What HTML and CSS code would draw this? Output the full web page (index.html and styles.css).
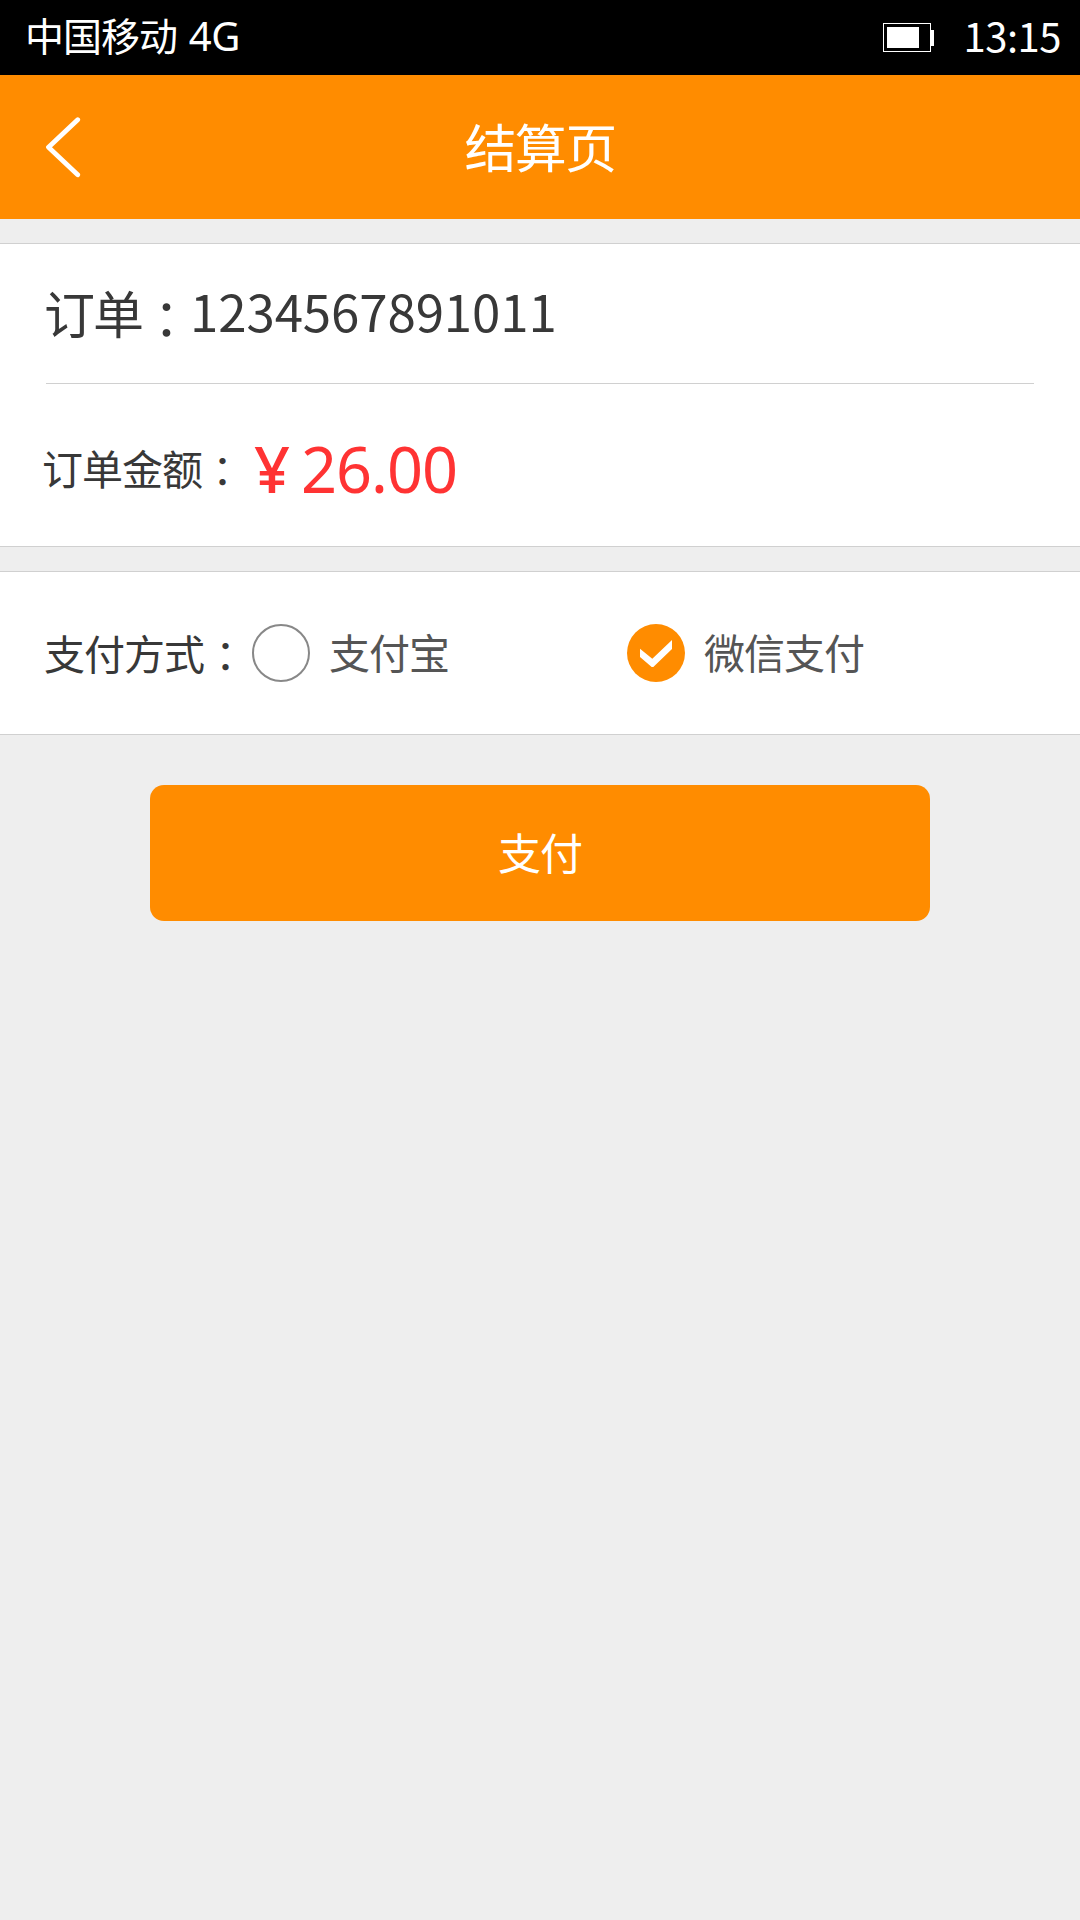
FILE: index.html
```html
<!DOCTYPE html>
<html lang="zh-CN">
<head>
<meta charset="UTF-8">
<title>结算页</title>
<link rel="stylesheet" href="styles.css">
</head>
<body>
<div class="status-bar">
  <span class="carrier">中国移动 <span class="network">4G</span></span>
  <svg class="battery" width="51" height="29" viewBox="0 0 51 29">
    <rect x="0.5" y="0.5" width="47" height="28" fill="none" stroke="#fff"/>
    <rect x="4" y="4" width="32" height="21" fill="#fff"/>
    <rect x="48" y="7" width="3" height="16" fill="#fff"/>
  </svg>
  <span class="clock">13:15</span>
</div>
<header class="header">
  <svg class="back" width="36" height="62" viewBox="0 0 36 62">
    <path d="M32.7 3.7 3.5 31.2 32.7 58.8" fill="none" stroke="#fff" stroke-width="4.8" stroke-linecap="round" stroke-linejoin="round"/>
  </svg>
  <h1 class="title">结算页</h1>
</header>
<main>
  <section class="card">
    <div class="row order">
      <span class="order-label">订单</span><span class="colon colon-large">：</span><span class="order-number">1234567891011</span>
    </div>
    <div class="row amount">
      <span class="label">订单金额</span><span class="colon">：</span><span class="yen">¥</span><span class="price">26.00</span>
    </div>
  </section>
  <section class="card methods">
    <span class="label">支付方式</span><span class="colon">：</span>
    <div class="option option-alipay">
      <span class="radio"></span>
      <span class="option-name">支付宝</span>
    </div>
    <div class="option option-wechat">
      <svg class="checked" width="58" height="58" viewBox="0 0 58 58">
        <circle cx="29" cy="29" r="29" fill="#ff8c00"/>
        <path d="M13 24.7 25.3 34.7 45 16V24.9L26.3 43H24.7L13 32.9Z" fill="#fff"/>
      </svg>
      <span class="option-name">微信支付</span>
    </div>
  </section>
  <button class="pay">支付</button>
</main>
</body>
</html>
```
FILE: styles.css
```css
* { box-sizing: border-box; }

body {
  margin: 0;
  min-height: 1920px;
  background: #eee;
  color: #383838;
  font-family: "Noto Sans CJK SC", sans-serif;
  font-size: 41px;
  line-height: 60px;
  white-space: nowrap;
}

.status-bar {
  display: flex;
  align-items: center;
  height: 75px;
  padding: 0 19px 0 25px;
  background: #000;
  color: #fff;
}

.carrier {
  margin-bottom: 5px;
  font-size: 39px;
  letter-spacing: -1px;
}

.network {
  margin-left: 4px;
  font-family: "Noto Sans", sans-serif;
  font-size: 40px;
  letter-spacing: -0.5px;
}

.battery { margin-left: auto; }
.clock { margin: 0 0 5px 30px; font-size: 40px; letter-spacing: -0.5px; }

.header {
  display: grid;
  grid-template-columns: 1fr auto 1fr;
  align-items: center;
  height: 144px;
  padding: 0 45px;
  background: #ff8c00;
  color: #fff;
}

.title {
  margin: 0 0 2px;
  font-size: 52px;
  font-weight: 400;
  letter-spacing: -1.7px;
}

.card {
  margin-top: 24px;
  padding: 0 46px;
  border-top: 1px solid #d0d0d0;
  border-bottom: 1px solid #d0d0d0;
  background: #fff;
}

.row { display: flex; align-items: center; }

.order {
  height: 140px;
  border-bottom: 1px solid #d0d0d0;
  font-size: 51px;
}

.order-label { margin: 0 0 3px -2px; letter-spacing: -2px; }

.order-number {
  margin: 0 0 7px -1px;
  letter-spacing: -0.1px;
}

.colon {
  width: 40px;
  font-family: "Noto Sans CJK TC", sans-serif;
  text-align: center;
}

.colon-large { width: 49px; margin: 6px 1px 0 -1px; }
.amount { height: 162px; }
.amount .label { margin: 3px 0 0 -4px; }
.amount .colon { margin-top: 7px; }
.label, .option-name { letter-spacing: -1px; }

.yen, .price {
  margin-top: 8px;
  color: #f33;
  font-family: "Noto Sans", sans-serif;
  font-size: 63px;
  letter-spacing: -1px;
}

.yen { margin-left: 12px; font-weight: 500; }
.price { margin-left: 12px; }

.methods {
  display: flex;
  align-items: center;
  height: 164px;
}

.methods .label { margin: 0 0 3px -2px; }
.methods .colon { margin: 2px 0 0 1px; }
.option { display: flex; align-items: center; gap: 19px; color: #555; }
.option-name { margin-bottom: 4px; }
.option-alipay { margin-left: 7px; }
.option-wechat { margin-left: 178px; }

.radio {
  width: 58px;
  height: 58px;
  border: 2px solid #888;
  border-radius: 50%;
}

.pay {
  display: block;
  width: 780px;
  height: 136px;
  margin: 50px auto 0;
  padding: 0 0 4px;
  border: 0;
  border-radius: 14px;
  background: #ff8c00;
  color: #fff;
  font: 43px "Noto Sans CJK SC", sans-serif;
  letter-spacing: -1px;
}
```
